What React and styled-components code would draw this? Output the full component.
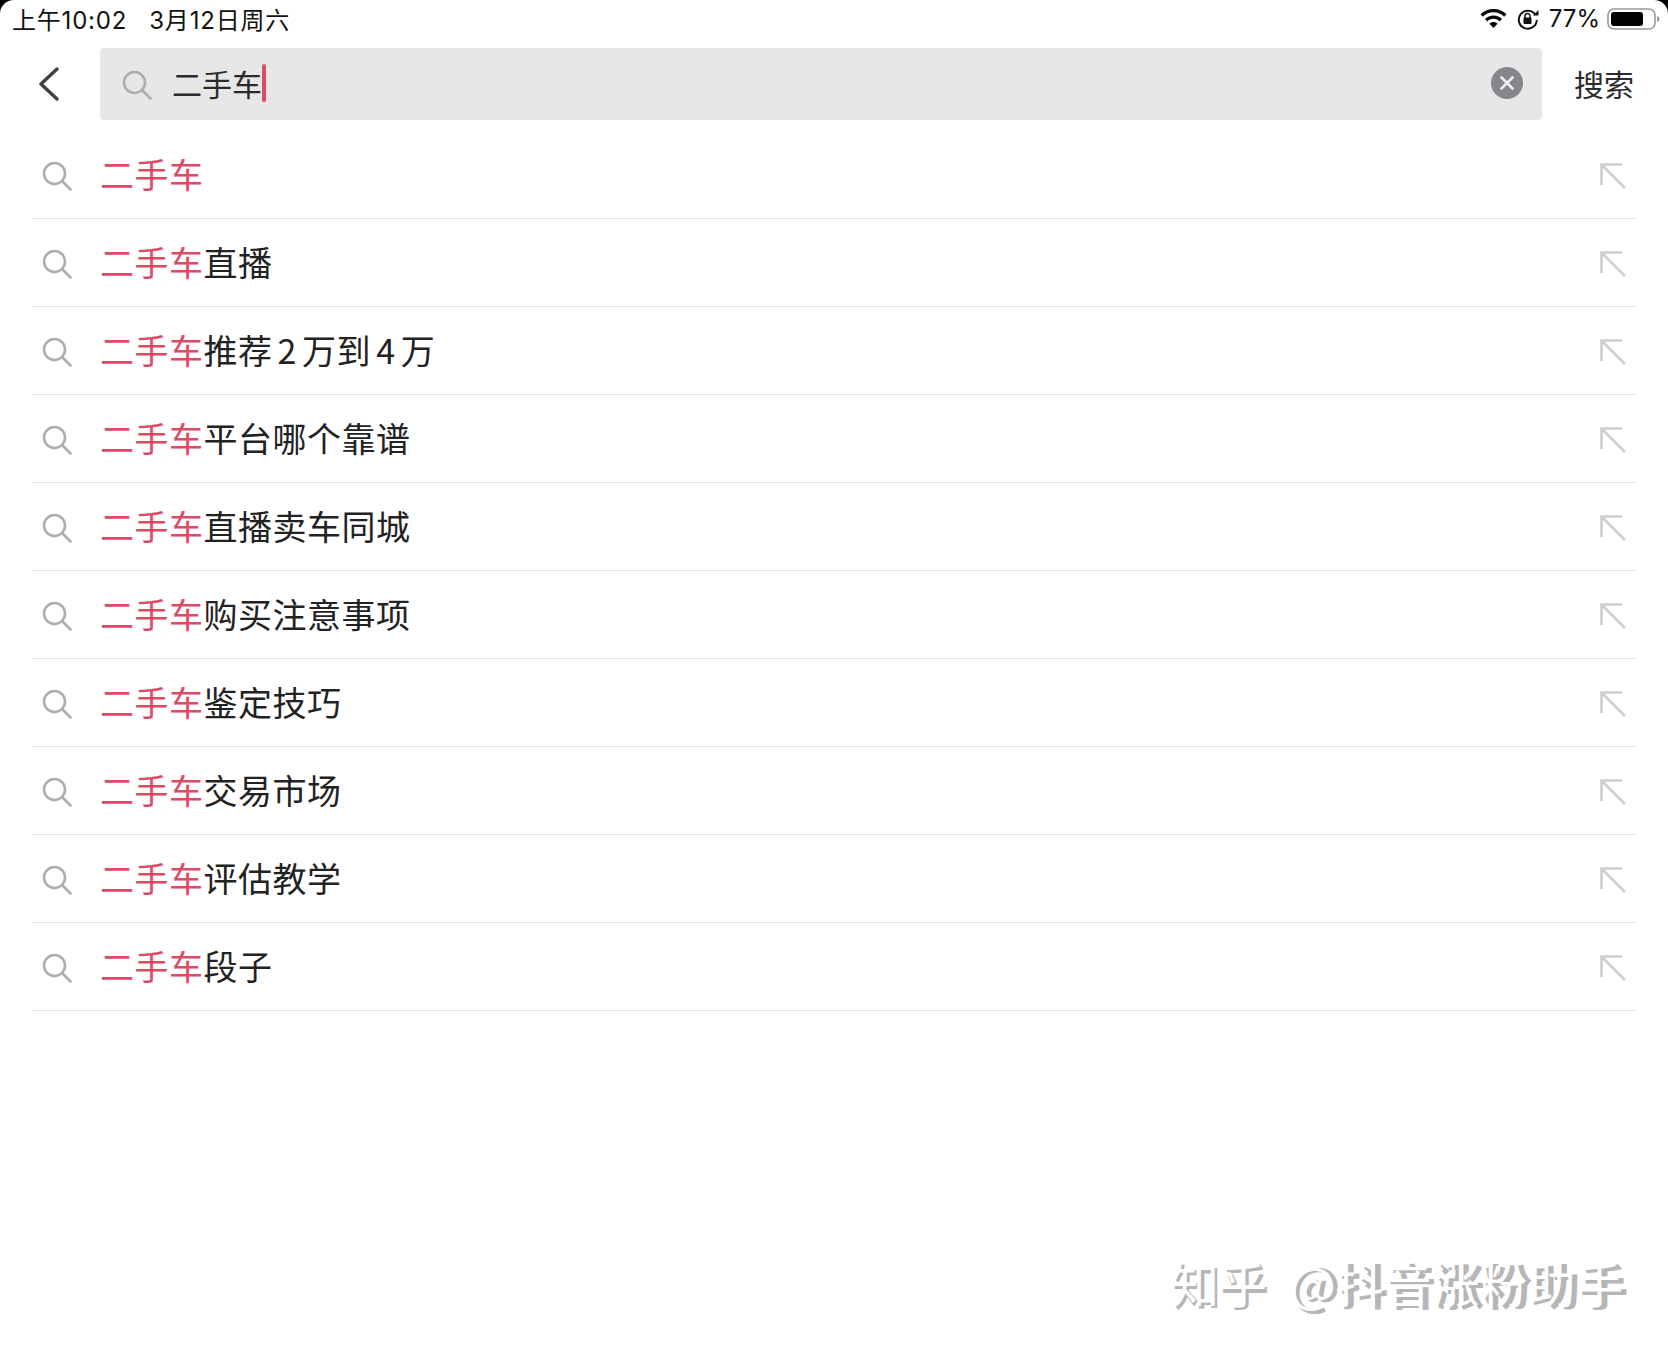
import React from "react";
import styled, { createGlobalStyle } from "styled-components";

const CJK = `"Noto Sans CJK SC", "Noto Sans", sans-serif`;

const Global = createGlobalStyle`
  html, body { margin: 0; padding: 0; background: #000; }
  * { box-sizing: border-box; }
`;

const Page = styled.div`
  position: relative;
  width: 1668px;
  height: 1354px;
  background: #fff;
  border-radius: 14px 14px 0 0;
  overflow: hidden;
  font-family: ${CJK};
  color: #222;
`;

const StatusBar = styled.div`
  height: 40px;
  padding: 0 7px 3px 12px;
  display: flex;
  align-items: center;
  justify-content: space-between;
  font-family: Inter, ${CJK};
  font-size: 24px;
  color: #111;
`;

const StatusLeft = styled.div`
  display: flex;
  gap: 22px;
  white-space: nowrap;
  letter-spacing: 0.8px;
`;

const StatusRight = styled.div`
  display: flex;
  align-items: center;
  gap: 10px;
`;

const Percent = styled.span`
  margin-right: -3px;
`;

const SearchRow = styled.div`
  margin-top: 8px;
  height: 72px;
  display: flex;
  align-items: stretch;
`;

const BackButton = styled.div`
  width: 100px;
  display: flex;
  align-items: center;
  padding-left: 38px;
`;

const SearchBox = styled.div`
  width: 1442px;
  background: #e7e7e8;
  border-radius: 4px;
  display: flex;
  align-items: center;
  padding: 0 19px 2px 22px;
`;

const SearchIconSlot = styled.span`
  display: flex;
  margin-top: 3px;
`;

const SearchText = styled.div`
  margin-left: 20px;
  font-size: 30px;
  line-height: 38px;
  color: #2b2b2e;
  display: flex;
  align-items: center;
  flex: 1;
`;

const Caret = styled.span`
  display: inline-block;
  width: 4px;
  height: 38px;
  border-radius: 2px;
  background: #d94c69;
`;

const SearchAction = styled.div`
  flex: 1;
  display: flex;
  align-items: center;
  justify-content: center;
  font-size: 30px;
  padding-bottom: 2px;
  padding-right: 2px;
  color: #2b2b2e;
`;

const List = styled.div`
  margin: 11px 32px 0;
`;

const Row = styled.div`
  height: 88px;
  display: flex;
  align-items: center;
  border-bottom: 1.5px solid #e4e4e5;
  padding: 0 10px;
`;

const RowIconSlot = styled.span`
  display: flex;
  margin-top: 2px;
`;

const RowText = styled.div`
  flex: 1;
  margin-left: 28px;
  margin-bottom: 2px;
  font-size: 34px;
  letter-spacing: 0.5px;
  word-spacing: -3px;
  color: #222;
  white-space: nowrap;
`;

const Highlight = styled.span`
  color: #d94c69;
`;

const Watermark = styled.div`
  position: absolute;
  left: 1173px;
  top: 1254px;
  font-size: 48px;
  line-height: 60px;
  font-weight: 700;
  word-spacing: 12px;
  white-space: nowrap;
  color: #b6b6b6;

  &::after {
    content: attr(data-text);
    position: absolute;
    left: -2px;
    top: -2px;
    font-weight: 400;
    color: #fff;
  }
`;

const SearchIcon = ({ size = 30, color = "#adadad" }) => (
  <svg width={size} height={size} viewBox="0 0 30 30" fill="none" stroke={color} strokeWidth="2.6" strokeLinecap="round">
    <circle cx="12.5" cy="12.5" r="10.5" />
    <path d="M20.5 20.5L28.5 28.5" />
  </svg>
);

const BackIcon = () => (
  <svg width="22" height="34" viewBox="0 0 22 34" fill="none" stroke="#404042" strokeWidth="3.4" strokeLinecap="round" strokeLinejoin="round">
    <path d="M19 2L3 17L19 32" />
  </svg>
);

const ClearIcon = () => (
  <svg width="32" height="32" viewBox="0 0 32 32">
    <circle cx="16" cy="16" r="16" fill="#85858c" />
    <path d="M10.5 10.5L21.5 21.5M21.5 10.5L10.5 21.5" stroke="#eeeeef" strokeWidth="2.6" strokeLinecap="round" />
  </svg>
);

const FillIcon = () => (
  <svg width="26" height="26" viewBox="0 0 26 26" fill="none" stroke="#cfcfcf" strokeWidth="2.6">
    <path d="M1.5 22V1.5H22" />
    <path d="M1.5 1.5L25 25" />
  </svg>
);

const WifiIcon = () => (
  <svg width="27" height="20" viewBox="0 0 27 20" fill="#0a0a0a">
    <path d="M13.5 0C8.4 0 3.8 2 .5 5.3l2.3 2.400C5.500 5 9.300 3.300 13.500 3.300S21.500 5 24.200 7.700l2.300-2.400C23.200 2 18.600 0 13.500 0z" />
    <path d="M13.500 6.500c-3.300 0-6.300 1.300-8.500 3.500l2.300 2.400c1.600-1.600 3.800-2.600 6.200-2.600s4.600 1 6.200 2.600l2.300-2.400c-2.200-2.200-5.200-3.500-8.500-3.500z" />
    <path d="M13.500 13c-1.600 0-3 .6-4.100 1.700l4.100 4.300 4.100-4.300C16.500 13.600 15.100 13 13.500 13z" />
  </svg>
);

const LockIcon = () => (
  <svg width="22" height="22" viewBox="0 0 22 22" fill="none">
    <path d="M18.500 7A9 9 0 1 0 19.800 12" stroke="#111" strokeWidth="2" />
    <path d="M16 7.500h5.500V2z" fill="#111" />
    <rect x="6.500" y="9.500" width="8" height="6.500" rx="1" fill="#111" />
    <path d="M8 10V8a2.500 2.500 0 0 1 5 0v2" stroke="#111" strokeWidth="1.500" />
  </svg>
);

const BatteryIcon = () => (
  <svg width="54" height="24" viewBox="0 0 54 24" fill="none">
    <rect x="1" y="2" width="47" height="20" rx="6" stroke="#9a9a9a" strokeWidth="1.600" />
    <rect x="4" y="5" width="32" height="14" rx="3" fill="#000" />
    <path d="M50 9c1.500.5 2.500 1.500 2.500 3s-1 2.500-2.500 3z" fill="#9a9a9a" />
  </svg>
);

const suggestions = [
  "",
  "直播",
  "推荐 2 万到 4 万",
  "平台哪个靠谱",
  "直播卖车同城",
  "购买注意事项",
  "鉴定技巧",
  "交易市场",
  "评估教学",
  "段子",
];

const watermark = "知乎 @抖音涨粉助手";

export default function App() {
  return (
    <Page>
      <Global />
      <StatusBar>
        <StatusLeft>
          <span>上午10:02</span>
          <span>3月12日周六</span>
        </StatusLeft>
        <StatusRight>
          <WifiIcon />
          <LockIcon />
          <Percent>77%</Percent>
          <BatteryIcon />
        </StatusRight>
      </StatusBar>
      <SearchRow>
        <BackButton>
          <BackIcon />
        </BackButton>
        <SearchBox>
          <SearchIconSlot>
            <SearchIcon />
          </SearchIconSlot>
          <SearchText>
            二手车
            <Caret />
          </SearchText>
          <ClearIcon />
        </SearchBox>
        <SearchAction>搜索</SearchAction>
      </SearchRow>
      <List>
        {suggestions.map((s) => (
          <Row key={s}>
            <RowIconSlot>
              <SearchIcon />
            </RowIconSlot>
            <RowText>
              <Highlight>二手车</Highlight>
              {s}
            </RowText>
            <RowIconSlot>
              <FillIcon />
            </RowIconSlot>
          </Row>
        ))}
      </List>
      <Watermark data-text={watermark}>{watermark}</Watermark>
    </Page>
  );
}
